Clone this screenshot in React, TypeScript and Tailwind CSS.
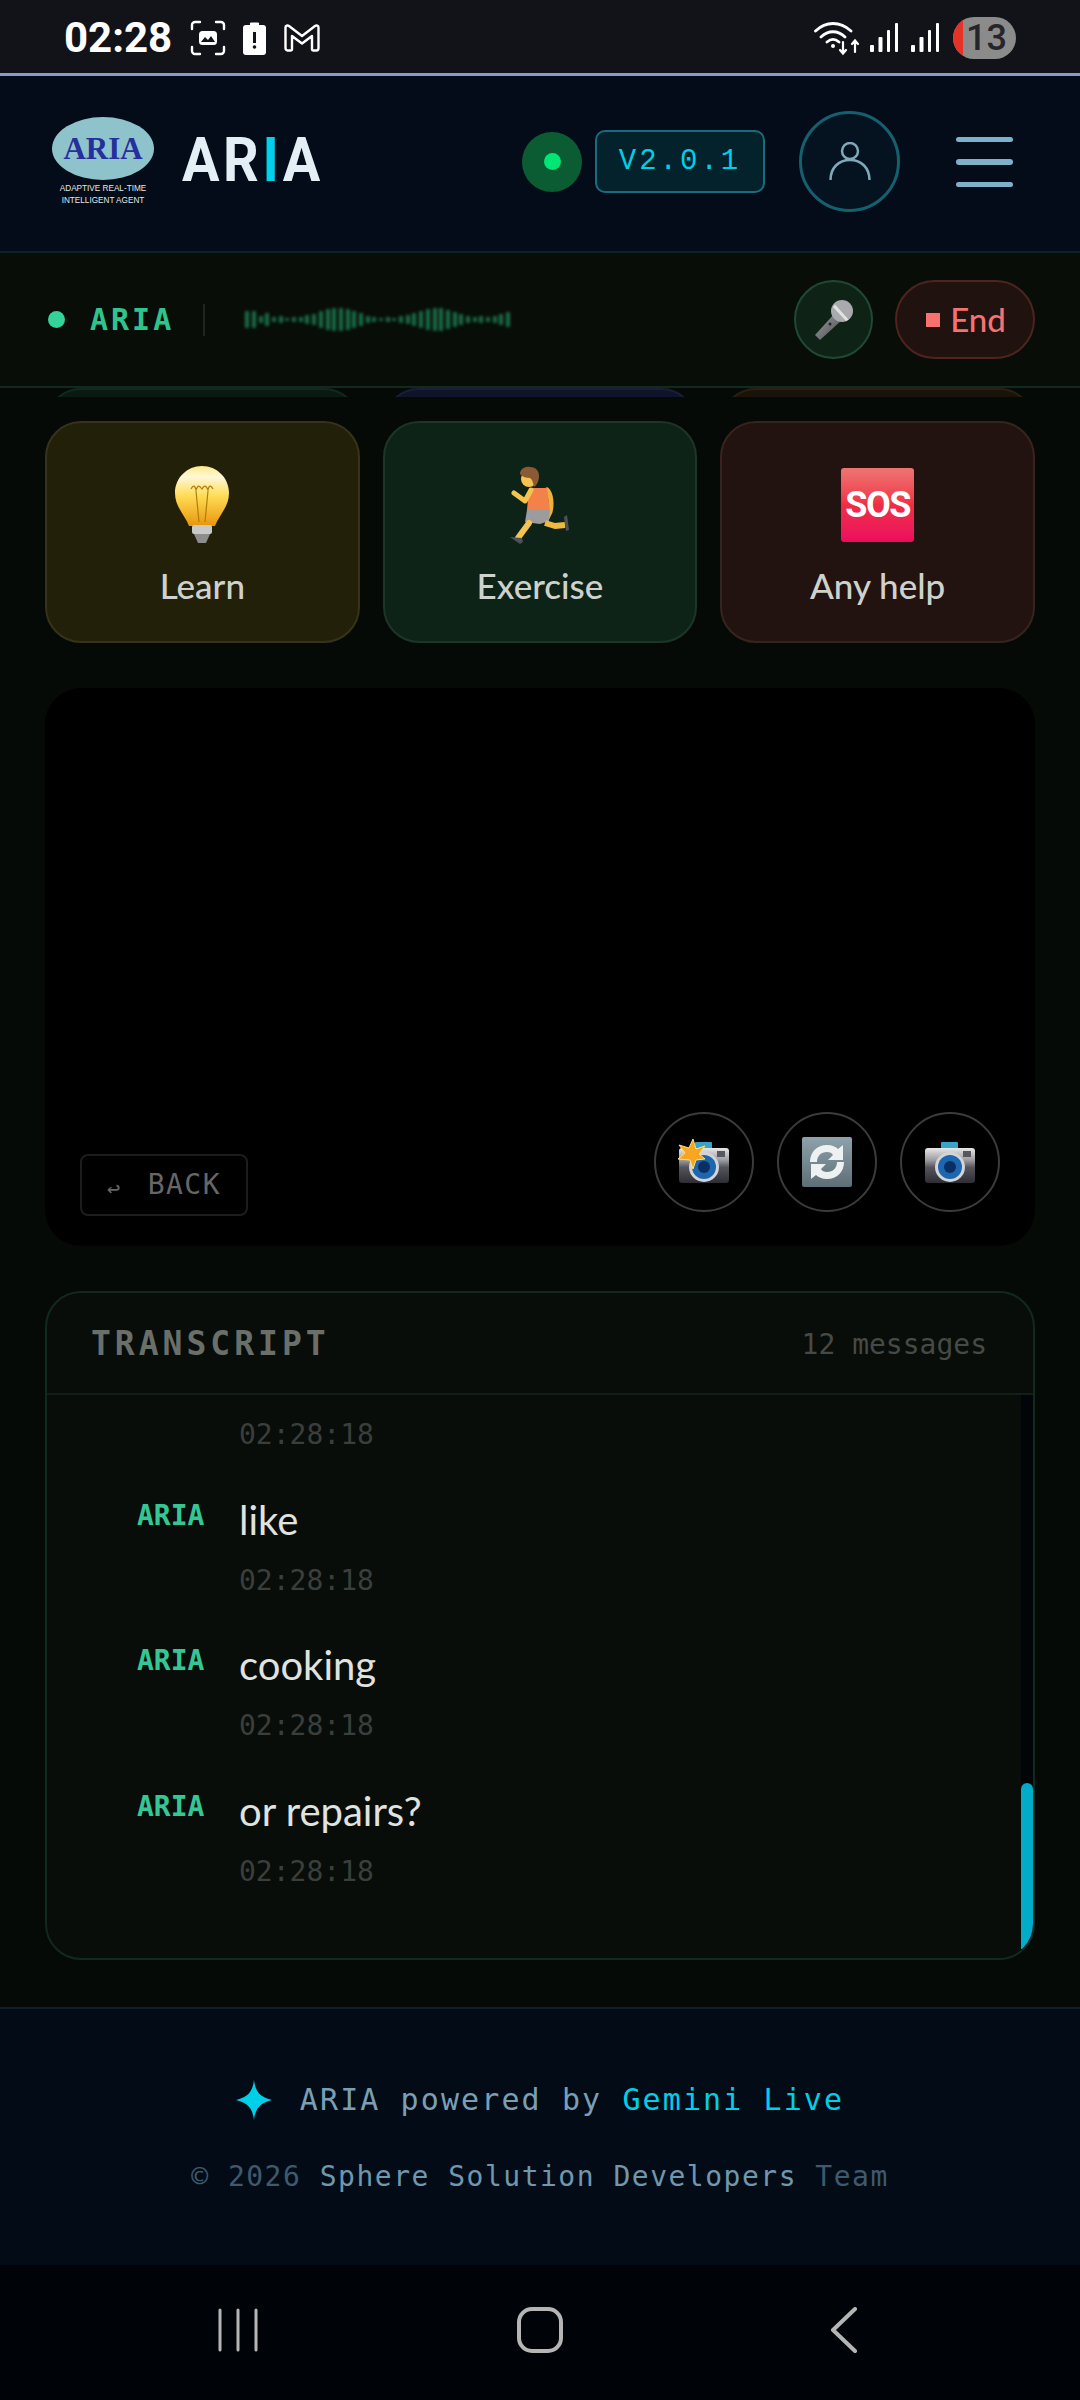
const waveHeights = [34, 32, 12, 24, 8, 12, 6, 10, 8, 16, 22, 34, 40, 46, 44, 40, 34, 26, 14, 10, 6, 8, 6, 12, 18, 24, 34, 42, 46, 44, 38, 30, 22, 14, 8, 12, 8, 14, 22, 30];

const messages = ["like", "cooking", "or repairs?"];

const mono = "font-['DejaVu_Sans_Mono',monospace]";
const body = "font-['Lato',sans-serif]";

function StatusIcons() {
  return (
    <div className="flex items-center gap-[18px] ml-[18px]">
      <svg width="36" height="36" viewBox="0 0 36 36" fill="none" stroke="white" strokeWidth="2.4" strokeLinecap="round">
        <path d="M2 9V5a3 3 0 0 1 3-3h5M26 2h5a3 3 0 0 1 3 3v4M34 27v4a3 3 0 0 1-3 3h-5M10 34H5a3 3 0 0 1-3-3v-4" />
        <rect x="9" y="11" width="18" height="14" rx="3.5" fill="white" stroke="none" />
        <path d="M11 22l4-5 3 3 3-4 4 6z" fill="#121318" stroke="none" />
      </svg>
      <svg width="23" height="33" viewBox="0 0 23 33" className="-ml-[1px]">
        <path d="M7 2a1 1 0 0 1 1-1.500h7a1 1 0 0 1 1 1.500v1h4a3 3 0 0 1 3 3v24a3 3 0 0 1-3 3H3a3 3 0 0 1-3-3V6a3 3 0 0 1 3-3h4z" fill="white" />
        <rect x="10" y="10" width="3" height="11" fill="#121318" />
        <circle cx="11.500" cy="25" r="1.800" fill="#121318" />
      </svg>
      <svg width="36" height="28" viewBox="0 0 36 28" fill="none" stroke="white" strokeWidth="2.400" strokeLinejoin="round">
        <path d="M1.500 3.500c0-2 2-2.500 3.500-1.500L18 12 31 2c1.500-1 3.500-.5 3.500 1.500V24c0 1.500-.8 2.500-2 2.500h-3c-1 0-1.500-.8-1.500-1.500V12l-10 7.500L8 12v13c0 .8-.5 1.500-1.500 1.500h-3c-1.200 0-2-1-2-2.500z" />
      </svg>
    </div>
  );
}

function StatusRight() {
  const bars = (
    <svg width="29" height="30" viewBox="0 0 29 30" fill="white">
      <rect x="0" y="22" width="4" height="7" rx="1" />
      <rect x="8.500" y="14" width="4" height="15" rx="1" />
      <rect x="17" y="7" width="3" height="22" rx="1" />
      <rect x="25" y="0" width="3" height="29" rx="1" />
    </svg>
  );
  return (
    <div className="flex items-center">
      <svg width="46" height="36" viewBox="0 0 46 36" fill="none" stroke="white" strokeWidth="2.800" strokeLinecap="round" className="mr-[10px]">
        <path d="M1.500 11C12 1 26 1 37 11M7 17c7-7 17-7 24 0M13 22c4-3.500 8-3.500 12 0" />
        <circle cx="19" cy="26" r="2" fill="white" stroke="none" />
        <path d="M29 22v11M26 30l3 3.500 3-3.500M41 32V21M38 24l3-3.500 3 3.500" strokeWidth="2.200" />
      </svg>
      <div className="mr-[12px]">{bars}</div>
      {bars}
      <div className="relative ml-[13px] w-[63px] h-[42px] rounded-full bg-[#8b8b8b] overflow-hidden flex items-center justify-center pl-[4px]">
        <div className="absolute left-0 top-0 bottom-0 w-[10px] bg-[#e53228]" />
        <span className="font-['Roboto',sans-serif] text-[#24262a] text-[36px] font-medium leading-none">13</span>
      </div>
    </div>
  );
}

function Logo() {
  return (
    <div className="w-[102px] flex flex-col items-center">
      <div className="w-[102px] h-[63px] rounded-[50%] bg-[#8fc3cc] flex items-center justify-center">
        <span className="font-['Liberation_Serif',serif] font-bold text-[#25309c] text-[31px] leading-none">ARIA</span>
      </div>
      <div className="mt-[3px] font-['Liberation_Sans',sans-serif] text-[8.200px] leading-[12px] text-[#e4e8e8] text-center whitespace-nowrap">
        ADAPTIVE REAL-TIME
        <br />
        INTELLIGENT AGENT
      </div>
    </div>
  );
}

function BulbEmoji() {
  return (
    <svg width="56" height="78" viewBox="0 0 56 78">
      <defs>
        <linearGradient id="bulbGlass" x1="0" y1="0" x2="0" y2="1">
          <stop offset="0" stopColor="#ffe98a" />
          <stop offset="0.18" stopColor="#fff8d8" />
          <stop offset="0.5" stopColor="#ffdc55" />
          <stop offset="1" stopColor="#e8950c" />
        </linearGradient>
      </defs>
      <path d="M28 0c15 0 27 12 27 27 0 14-10 22-14 33H15C11 49 1 41 1 27 1 12 13 0 28 0z" fill="url(#bulbGlass)" />
      <path d="M17 23c2-4 4-4 5 1 2-5 3-5 6-1 2-4 4-4 6 1 1-5 3-5 5-1M22 25l3 31M34 25l-3 31" fill="none" stroke="#b07f0a" strokeWidth="1.200" />
      <rect x="18" y="59" width="20" height="9" rx="2" fill="#c9c9c9" />
      <path d="M20 68h16l-4 9h-8z" fill="#8d8d8d" />
    </svg>
  );
}

function RunnerEmoji() {
  return (
    <svg width="62" height="78" viewBox="0 0 62 78">
      <path d="M23 72L20 55" stroke="none" />
      <path d="M38 24c4 4 5 14 3 22l-3 6" fill="none" stroke="#e9b33d" strokeWidth="5" strokeLinecap="round" />
      <path d="M20 22h18l3 22H18z" fill="#f4814a" />
      <path d="M22 24L16 35 5 27" fill="none" stroke="#f5c34f" strokeWidth="5" strokeLinecap="round" strokeLinejoin="round" />
      <circle cx="20" cy="13" r="8" fill="#f5c34f" />
      <path d="M11 8c0-5 5-8 10-7 6 0 9 4 9 9 0 5-2 9-5 11-1-5-2-8-4-9-4 0-7-1-10-4z" fill="#8b5a34" />
      <path d="M18 44h23l-1 11-9 3-15-2z" fill="#9c9c9c" />
      <path d="M20 57L9 72" stroke="#f5c34f" strokeWidth="6" strokeLinecap="round" />
      <path d="M36 57l10 3 10-1" fill="none" stroke="#f0b93f" strokeWidth="6" strokeLinejoin="round" />
      <path d="M1 71l12 1 1 4-3 2z" fill="#4d5158" />
      <path d="M58 49l2 15-3 1-2-14z" fill="#4d5158" />
    </svg>
  );
}

function SosEmoji() {
  return (
    <div className="w-[73px] h-[74px] rounded-[3px] bg-gradient-to-b from-[#ef7373] via-[#ef2d45] to-[#ec0a5f] flex items-center justify-center">
      <span className="font-['Roboto',sans-serif] font-bold text-white text-[36px] leading-none tracking-[-1.500px]">SOS</span>
    </div>
  );
}

function MicEmoji() {
  return (
    <svg width="42" height="42" viewBox="0 0 42 42">
      <defs>
        <linearGradient id="micBody" x1="0" y1="0" x2="1" y2="1">
          <stop offset="0" stopColor="#9a9ca0" />
          <stop offset="1" stopColor="#4a4c50" />
        </linearGradient>
      </defs>
      <path d="M22 14l7 7L7 41l-5-5z" fill="url(#micBody)" />
      <circle cx="29" cy="12" r="11" fill="#a8aaae" />
      <path d="M20 8l13 14 2.500-1.500L22 5.500z" fill="#e2e2e2" />
      <circle cx="17" cy="25" r="1.500" fill="#222" />
    </svg>
  );
}

function CameraEmoji({ flash = false }: { flash?: boolean }) {
  const id = flash ? "camBodyA" : "camBodyB";
  return (
    <svg width="52" height="42" viewBox="0 0 52 42" className="overflow-visible mt-[2px]">
      <defs>
        <linearGradient id={id} x1="0" y1="0" x2="0" y2="1">
          <stop offset="0" stopColor="#e8e8e8" />
          <stop offset="0.35" stopColor="#9b9ba0" />
          <stop offset="0.55" stopColor="#55555c" />
          <stop offset="1" stopColor="#2d2d33" />
        </linearGradient>
      </defs>
      <rect x="17" y="0" width="17" height="8" rx="1" fill="#3aa3c9" />
      <rect x="1" y="6" width="50" height="35" rx="3" fill={`url(#${id})`} />
      <rect x="39" y="9" width="8" height="6" fill="#55585c" />
      <circle cx="26" cy="25" r="15" fill="#d4d4d8" />
      <circle cx="26" cy="25" r="12" fill="#1c67ae" />
      <circle cx="26" cy="25" r="6" fill="#0c2f63" />
      {flash && <path d="M15 -3l3 10 9-3-6 8 6 5-9 1-3 9-3-9-12-1 7-6-6-8 10 3z" fill="#f6a623" stroke="#ffe27a" strokeWidth="1" />}
    </svg>
  );
}

function RefreshEmoji() {
  return (
    <svg width="50" height="50" viewBox="0 0 50 50">
      <defs>
        <linearGradient id="refreshBg" x1="0" y1="0" x2="0" y2="1">
          <stop offset="0" stopColor="#8ea2ab" />
          <stop offset="1" stopColor="#5e6e76" />
        </linearGradient>
      </defs>
      <rect width="50" height="50" rx="2" fill="url(#refreshBg)" />
      <path d="M8 25C8 15 15 8 25 8c5 0 9 2 11 4l5-4v15H26l5-5c-1-2-3-3-6-3-6 0-10 4-10 10z" fill="#eef1f2" />
      <path d="M42 25c0 10-7 17-17 17-5 0-9-2-11-4l-5 4V27h15l-5 5c1 2 3 3 6 3 6 0 10-4 10-10z" fill="#eef1f2" />
    </svg>
  );
}

function QuickCard({ label, bg, children }: { label: string; bg: string; children: React.ReactNode }) {
  return (
    <div className={`h-[222px] rounded-[36px] border-2 flex flex-col items-center ${bg}`}>
      <div className="h-[80px] mt-[42px] flex items-center justify-center">{children}</div>
      <div className={`${body} mt-[20px] text-[35px] leading-[40px] font-medium text-[#cfd2cc]`}>{label}</div>
    </div>
  );
}

function RoundControl({ children }: { children: React.ReactNode }) {
  return <div className="w-[100px] h-[100px] rounded-full border-2 border-[#3b3b3b] flex items-center justify-center">{children}</div>;
}

export default function App() {
  return (
    <div className="w-[1080px] h-[2400px] flex flex-col overflow-hidden bg-[#050a06]">
      <div className="h-[73px] shrink-0 bg-[#121318] flex items-center justify-between pl-[64px] pr-[64px] pt-[3px]">
        <div className="flex items-center">
          <span className="font-['Roboto',sans-serif] font-bold text-white text-[42px] leading-none">02:28</span>
          <StatusIcons />
        </div>
        <StatusRight />
      </div>
      <div className="h-[3px] shrink-0 bg-[#8a9bc9]" />

      <header className="h-[177px] shrink-0 bg-[#030c18] border-b-2 border-[#0b2229] flex items-center pl-[52px] pr-[67px] pb-[4px]">
        <Logo />
        <div className="ml-[28px] mb-[4px] w-[137px] font-['Roboto',sans-serif] font-bold text-[62px] leading-none tracking-[4px] text-[#e4eff5] scale-x-90 origin-left whitespace-nowrap">
          AR<span className="text-[#00d0ec]">I</span>A
        </div>
        <div className="ml-auto w-[60px] h-[60px] rounded-full bg-[#0b5c32] flex items-center justify-center">
          <div className="w-[17px] h-[17px] rounded-full bg-[#00e676]" />
        </div>
        <div className="font-['Liberation_Mono',monospace] ml-[13px] w-[170px] h-[63px] rounded-[10px] border-2 border-[#186c7d] bg-[#04222b] flex items-center justify-center text-[#00cfe8] text-[29px] tracking-[3px]">
          V2.0.1
        </div>
        <div className="ml-[34px] w-[101px] h-[101px] rounded-full border-[3px] border-[#15606f] bg-[#04131f] flex items-center justify-center">
          <svg width="42" height="40" viewBox="0 0 42 40" fill="none" stroke="#7fa9bb" strokeWidth="2.500">
            <circle cx="21" cy="9" r="8" />
            <path d="M1.500 38c0-12 8-20 19.500-20s19.500 8 19.500 20" />
          </svg>
        </div>
        <div className="ml-[56px] w-[57px] flex flex-col gap-[17px]">
          <div className="h-[5px] rounded-full bg-[#7fb0cb]" />
          <div className="h-[6px] rounded-full bg-[#7fb0cb]" />
          <div className="h-[5px] rounded-full bg-[#7fb0cb]" />
        </div>
      </header>

      <div className="h-[135px] shrink-0 bg-[#080d08] border-b-2 border-[#12291f] flex items-center pl-[48px] pr-[45px]">
        <div className="w-[17px] h-[17px] rounded-full bg-[#34d399]" />
        <span className={`${mono} ml-[25px] font-bold text-[#2fc48d] text-[30px] tracking-[3px] leading-none`}>ARIA</span>
        <div className="ml-[29px] w-[2px] h-[32px] bg-[#1e251f]" />
        <div className="ml-[40px] w-[265px] h-[50px] flex items-center justify-between blur-[1.500px]">
          {waveHeights.map((h, i) => (
            <div key={i} className="w-[4px] bg-[#1a6e48] rounded-[1px]" style={{ height: `${h * 0.52}px` }} />
          ))}
        </div>
        <div className="ml-auto w-[79px] h-[79px] rounded-full bg-[#0e2216] border-2 border-[#1e4a35] flex items-center justify-center">
          <MicEmoji />
        </div>
        <div className="ml-[22px] w-[140px] h-[79px] rounded-full bg-[#1f120f] border-2 border-[#4f241f] flex items-center justify-center gap-[10px] pl-[2px]">
          <div className="w-[14px] h-[14px] bg-[#f87171]" />
          <span className={`${body} text-[#f87171] text-[33px] font-medium leading-none`}>End</span>
        </div>
      </div>

      <main className="flex-1 px-[45px] flex flex-col">
        <div className="grid grid-cols-3 gap-[23px] h-[9px] overflow-hidden items-end">
          <div className="h-[80px] rounded-[36px] border-2 bg-[#0a1a12] border-[#122a1e]" />
          <div className="h-[80px] rounded-[36px] border-2 bg-[#10142a] border-[#1a1e36]" />
          <div className="h-[80px] rounded-[36px] border-2 bg-[#1a130a] border-[#2a2012]" />
        </div>

        <div className="mt-[24px] grid grid-cols-3 gap-[23px]">
          <QuickCard label="Learn" bg="bg-[#23200a] border-[#37331a]">
            <BulbEmoji />
          </QuickCard>
          <QuickCard label="Exercise" bg="bg-[#0e2318] border-[#1c3628]">
            <RunnerEmoji />
          </QuickCard>
          <QuickCard label="Any help" bg="bg-[#231310] border-[#38241f]">
            <SosEmoji />
          </QuickCard>
        </div>

        <section className="mt-[45px] h-[558px] rounded-[36px] bg-black flex items-end justify-between pl-[35px] pr-[35px] pb-[30px]">
          <div className={`${mono} w-[168px] h-[62px] rounded-[8px] border-2 border-[#1d1d1d] flex items-center justify-center gap-[26px] text-[#666] text-[28px] tracking-[1.500px]`}>
            <span className="text-[22px] mt-[6px]">↩</span>
            <span>BACK</span>
          </div>
          <div className="flex gap-[23px] mb-[4px]">
            <RoundControl>
              <CameraEmoji flash />
            </RoundControl>
            <RoundControl>
              <RefreshEmoji />
            </RoundControl>
            <RoundControl>
              <CameraEmoji />
            </RoundControl>
          </div>
        </section>

        <section className="mt-[45px] h-[669px] rounded-[36px] border-2 border-[#12291f] bg-[#080d09] overflow-hidden flex flex-col">
          <div className="h-[102px] shrink-0 border-b-2 border-[#101f18] flex items-center justify-between pl-[44px] pr-[46px] pt-[2px]">
            <span className={`${mono} font-bold text-[#6a6f6a] text-[33px] tracking-[4px]`}>TRANSCRIPT</span>
            <span className={`${mono} text-[#454a46] text-[28px] mt-[2px]`}>12 messages</span>
          </div>
          <div className="flex-1 flex min-h-0">
            <div className="flex-1 pt-[22px] flex flex-col gap-[42.500px]">
              <div className={`${mono} pl-[192px] text-[#3a3f3c] text-[28px] leading-[36px]`}>02:28:18</div>
              {messages.map((m) => (
                <div key={m} className="flex pl-[90px] gap-[34px]">
                  <span className={`${mono} w-[68px] mt-[2px] font-bold text-[#34c795] text-[28px] leading-[36px]`}>ARIA</span>
                  <div className="flex flex-col gap-[19px]">
                    <span className={`${body} text-[#e0e3df] text-[40px] leading-[48px]`}>{m}</span>
                    <span className={`${mono} text-[#3a3f3c] text-[28px] leading-[36px]`}>02:28:18</span>
                  </div>
                </div>
              ))}
            </div>
            <div className="w-[12px] bg-[#020508] flex flex-col justify-end pb-[9px]">
              <div className="h-[166px] bg-[#00acc8] rounded-t-full" />
            </div>
          </div>
        </section>
      </main>

      <footer className="h-[258px] shrink-0 bg-[#030c16] border-t-2 border-[#0b2229] flex flex-col items-center pt-[71px]">
        <div className={`${mono} flex items-center text-[30px] leading-[40px] tracking-[2.100px] text-[#7a9fb5]`}>
          <svg width="36" height="40" viewBox="0 0 36 40" className="mr-[28px]">
            <path d="M18 0c1.500 12 6 17 18 20-12 3-16.500 8-18 20-1.500-12-6-17-18-20 12-3 16.500-8 18-20z" fill="#00cfe8" />
          </svg>
          <span className="whitespace-pre">ARIA powered by </span>
          <span className="text-[#00cfe8]">Gemini Live</span>
        </div>
        <div className={`${mono} mt-[39px] text-[28px] leading-[36px] tracking-[1.500px] text-[#3d5a6e] whitespace-pre`}>
          © 2026 <span className="text-[#6f97ae]">Sphere Solution Developers</span> Team
        </div>
      </footer>

      <nav className="h-[135px] shrink-0 bg-[#000408] flex items-center pl-[218px] pb-[6px]">
        <svg width="41" height="44" viewBox="0 0 41 44" stroke="#b5b5b5" strokeWidth="3" strokeLinecap="round">
          <path d="M2 2v40M20 2v40M38 2v40" />
        </svg>
        <div className="ml-[258px] w-[46px] h-[46px] rounded-[15px] border-[4px] border-[#b5b5b5]" />
        <svg width="28" height="46" viewBox="0 0 28 46" fill="none" stroke="#b5b5b5" strokeWidth="4" strokeLinecap="round" strokeLinejoin="round" className="ml-[267px]">
          <path d="M25 2L3 23l22 21" />
        </svg>
      </nav>
    </div>
  );
}
